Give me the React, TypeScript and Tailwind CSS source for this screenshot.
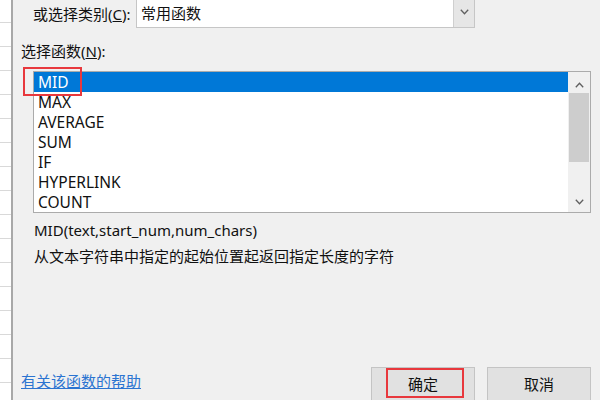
import React from "react";

const font = "font-['Noto_Sans','Noto_Sans_CJK_SC',sans-serif]";

function Chevron({ up = false }: { up?: boolean }) {
  return (
    <svg width="9" height="6" viewBox="0 0 9 6" className="block">
      <path
        d={up ? "M0.8 5.2 L4.5 1.2 L8.2 5.2" : "M0.8 0.8 L4.5 4.8 L8.2 0.8"}
        fill="none"
        stroke="#5f5f5f"
        strokeWidth="1.3"
      />
    </svg>
  );
}

const items = ["MID", "MAX", "AVERAGE", "SUM", "IF", "HYPERLINK", "COUNT"];

export default function App() {
  return (
    <div className={`w-[600px] h-[400px] overflow-hidden flex bg-[#f0f0f0] text-[#111] ${font}`}>
      {/* spreadsheet strip */}
      <div className="w-[11px] h-full bg-white flex flex-col shrink-0">
        <div className="h-[23px] shrink-0 border-b border-[#d9d9d9]" />
        {Array.from({ length: 16 }).map((_, i) => (
          <div key={i} className="h-[24px] shrink-0 border-b border-[#d9d9d9]" />
        ))}
      </div>
      <div className="w-[2px] h-full bg-[#a8a8a8] shrink-0" />

      {/* dialog */}
      <div className="flex-1 flex flex-col">
        {/* category row */}
        <div className="flex h-[28px] items-center pl-[20px]">
          <div className="w-[103px] text-[15px] leading-[20px] whitespace-nowrap">
            或选择类别(<span className="underline">C</span>):
          </div>
          <div className="w-[339px] h-[28px] bg-white border-x border-b border-[#c6c6c6] flex">
            <div className="flex-1 pl-[4px] text-[15px] leading-[26px]">常用函数</div>
            <div className="w-[21px] h-full bg-[#e6e6e6] border-l border-[#cfcfcf] flex items-start justify-center pt-[9px]">
              <Chevron />
            </div>
          </div>
        </div>

        <div className="mt-[13px] h-[20px] leading-[20px] pl-[8px] text-[15px] whitespace-nowrap">
          选择函数(<span className="underline">N</span>):
        </div>

        {/* list box */}
        <div className="relative mt-[10px] ml-[20px] w-[558px] h-[142px] border border-[#ababab] bg-white flex">
          <div className="flex-1 flex flex-col">
            {items.map((it, i) => (
              <div
                key={it}
                className={`h-[20px] leading-[20px] pl-[4px] text-[15.5px] ${
                  i === 0 ? "bg-[#0078d7] text-white" : "text-[#111]"
                }`}
              >
                {it}
              </div>
            ))}
          </div>
          <div className="w-[22px] h-full bg-[#f0f0f0] flex flex-col">
            <div className="h-[21px] flex justify-center items-start pt-[10px]">
              <Chevron up />
            </div>
            <div className="h-[69px] mx-[1px] bg-[#cdcdcd]" />
            <div className="flex-1" />
            <div className="h-[20px] flex justify-center items-center">
              <Chevron />
            </div>
          </div>
          <div className="absolute left-[-11px] top-[-5px] w-[59px] h-[29px] border-2 border-[#e8383d]" />
        </div>

        <div className="mt-[7px] pl-[21px] h-[20px] leading-[20px] text-[15px] whitespace-nowrap">
          MID(text,start_num,num_chars)
        </div>
        <div className="mt-[6px] pl-[21px] h-[20px] leading-[20px] text-[15px] whitespace-nowrap">
          从文本字符串中指定的起始位置起返回指定长度的字符
        </div>

        <div className="mt-[83px] ml-[4px] w-[575px] h-px bg-[#dcdcdc]" />

        <div className="mt-[18px] flex items-start pr-[9px]">
          <div className="mt-[4px] ml-[8px] h-[20px] leading-[20px] text-[15px] text-[#2b74d1] underline whitespace-nowrap">
            有关该函数的帮助
          </div>
          <div className="ml-auto flex gap-[12px]">
            <div className="relative w-[104px] h-[40px] bg-[#e1e1e1] border border-[#c4c4c4] flex justify-center pt-[6px]">
              <span className="text-[15px] leading-[20px]">确定</span>
              <div className="absolute left-[14px] top-0 w-[78px] h-[30px] border-2 border-[#e8383d]" />
            </div>
            <div className="w-[104px] h-[40px] bg-[#e1e1e1] border border-[#c4c4c4] flex justify-center pt-[6px]">
              <span className="text-[15px] leading-[20px]">取消</span>
            </div>
          </div>
        </div>
      </div>
    </div>
  );
}
